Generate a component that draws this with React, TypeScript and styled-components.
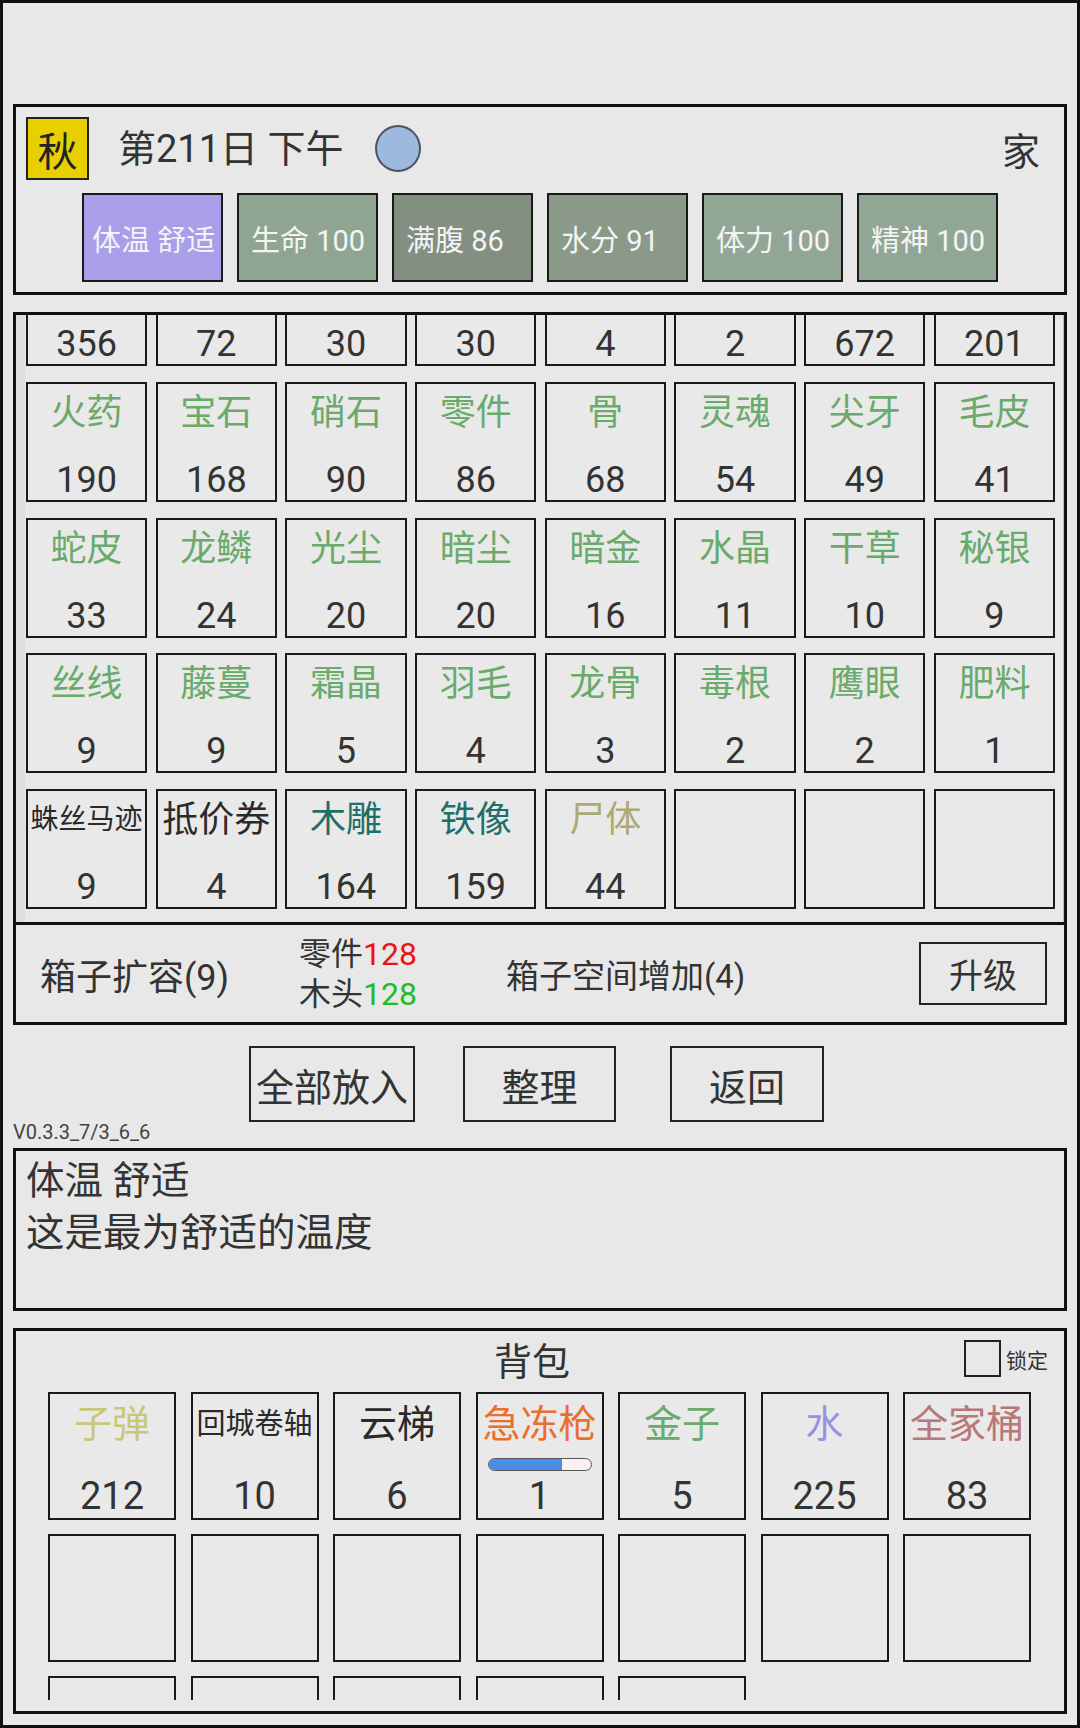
import React, { useLayoutEffect, useRef } from 'react'
import styled, { createGlobalStyle } from 'styled-components'

const GlobalStyle = createGlobalStyle`
  html, body {
    margin: 0;
    padding: 0;
    background: #e8e8e8;
  }
  body {
    font-family: Roboto, "Noto Sans CJK SC", sans-serif;
    color: #333;
  }
  * {
    box-sizing: border-box;
  }
`

type Item = { name: string; count?: number; color?: string; bar?: number }

const GREEN = '#6aaa6a'
const TEAL = '#1f6f68'
const OLIVE = '#aaaa72'
const INK = '#2a2a2a'

const stats = [
  { label: '体温 舒适', bg: '#a99ee9', inset: 8 },
  { label: '生命 100', bg: '#8fa592', inset: 12 },
  { label: '满腹 86', bg: '#838f80', inset: 12 },
  { label: '水分 91', bg: '#8a9988', inset: 12 },
  { label: '体力 100', bg: '#92a695', inset: 12 },
  { label: '精神 100', bg: '#92a695', inset: 12 },
]

const storage: Item[] = [
  { name: '木头', count: 356, color: GREEN },
  { name: '铁矿', count: 72, color: GREEN },
  { name: '石块', count: 30, color: GREEN },
  { name: '布料', count: 30, color: GREEN },
  { name: '皮革', count: 4, color: GREEN },
  { name: '草药', count: 2, color: GREEN },
  { name: '纤维', count: 672, color: GREEN },
  { name: '生肉', count: 201, color: GREEN },
  { name: '火药', count: 190, color: GREEN },
  { name: '宝石', count: 168, color: GREEN },
  { name: '硝石', count: 90, color: GREEN },
  { name: '零件', count: 86, color: GREEN },
  { name: '骨', count: 68, color: GREEN },
  { name: '灵魂', count: 54, color: GREEN },
  { name: '尖牙', count: 49, color: GREEN },
  { name: '毛皮', count: 41, color: GREEN },
  { name: '蛇皮', count: 33, color: GREEN },
  { name: '龙鳞', count: 24, color: GREEN },
  { name: '光尘', count: 20, color: GREEN },
  { name: '暗尘', count: 20, color: GREEN },
  { name: '暗金', count: 16, color: GREEN },
  { name: '水晶', count: 11, color: GREEN },
  { name: '干草', count: 10, color: GREEN },
  { name: '秘银', count: 9, color: GREEN },
  { name: '丝线', count: 9, color: GREEN },
  { name: '藤蔓', count: 9, color: GREEN },
  { name: '霜晶', count: 5, color: GREEN },
  { name: '羽毛', count: 4, color: GREEN },
  { name: '龙骨', count: 3, color: GREEN },
  { name: '毒根', count: 2, color: GREEN },
  { name: '鹰眼', count: 2, color: GREEN },
  { name: '肥料', count: 1, color: GREEN },
  { name: '蛛丝马迹', count: 9, color: INK },
  { name: '抵价券', count: 4, color: INK },
  { name: '木雕', count: 164, color: TEAL },
  { name: '铁像', count: 159, color: TEAL },
  { name: '尸体', count: 44, color: OLIVE },
  { name: '' },
  { name: '' },
  { name: '' },
]

const bag: Item[] = [
  { name: '子弹', count: 212, color: '#c8c878' },
  { name: '回城卷轴', count: 10, color: INK },
  { name: '云梯', count: 6, color: INK },
  { name: '急冻枪', count: 1, color: '#e8702a', bar: 72 },
  { name: '金子', count: 5, color: GREEN },
  { name: '水', count: 225, color: '#9494e0' },
  { name: '全家桶', count: 83, color: '#b87878' },
  ...Array.from({ length: 12 }, () => ({ name: '' })),
]

// shrink long names so they fit inside the slot
const fitSize = (name: string, base: number, inner: number) =>
  Math.min(base, Math.floor(inner / Math.max(name.length, 1)))

const App: React.FC = () => {
  const storageRef = useRef<HTMLDivElement>(null)

  useLayoutEffect(() => {
    const el = storageRef.current
    if (el) el.scrollTop = el.scrollHeight
  }, [])

  return (
    <>
      <GlobalStyle />
      <Page>
        <StatusPanel>
          <HeaderRow>
            <SeasonBadge>秋</SeasonBadge>
            <DayText>第211日 下午</DayText>
            <MoonDot />
            <Location>家</Location>
          </HeaderRow>
          <StatsRow>
            {stats.map((s) => (
              <StatBox key={s.label} $bg={s.bg} $inset={s.inset}>
                {s.label}
              </StatBox>
            ))}
          </StatsRow>
        </StatusPanel>

        <StoragePanel>
          <StorageScroll ref={storageRef}>
            <StorageGrid>
              {storage.map((it, i) => (
                <StorageCell key={i}>
                  {it.name && (
                    <>
                      <StorageName $color={it.color} $size={fitSize(it.name, 36, 113)}>
                        {it.name}
                      </StorageName>
                      <StorageCount>{it.count}</StorageCount>
                    </>
                  )}
                </StorageCell>
              ))}
            </StorageGrid>
          </StorageScroll>
          <ExpandBar>
            <ExpandLabel $size={36}>箱子扩容(9)</ExpandLabel>
            <CostBlock>
              <div>
                零件<CostValue $ok={false}>128</CostValue>
              </div>
              <div>
                木头<CostValue $ok>128</CostValue>
              </div>
            </CostBlock>
            <ExpandLabel $size={33}>箱子空间增加(4)</ExpandLabel>
            <UpgradeButton>升级</UpgradeButton>
          </ExpandBar>
        </StoragePanel>

        <ButtonRow>
          <ActionButton $width={166} $after={48}>全部放入</ActionButton>
          <ActionButton $width={153} $after={54}>整理</ActionButton>
          <ActionButton $width={154} $after={0}>返回</ActionButton>
        </ButtonRow>

        <Version>V0.3.3_7/3_6_6</Version>

        <DescBox>
          <div>体温 舒适</div>
          <div>这是最为舒适的温度</div>
        </DescBox>

        <BagPanel>
          <BagHeader>
            <span />
            <BagTitle>背包</BagTitle>
            <LockToggle>
              <LockBox />
              <LockLabel>锁定</LockLabel>
            </LockToggle>
          </BagHeader>
          <BagScroll>
            <BagGrid>
              {bag.map((it, i) => (
                <BagCell key={i}>
                  {it.name && (
                    <>
                      <BagName $color={it.color} $size={fitSize(it.name, 38, 116)}>
                        {it.name}
                      </BagName>
                      {it.bar !== undefined && (
                        <DurabilityBar>
                          <DurabilityFill style={{ width: `${it.bar}%` }} />
                        </DurabilityBar>
                      )}
                      <BagCount>{it.count}</BagCount>
                    </>
                  )}
                </BagCell>
              ))}
            </BagGrid>
          </BagScroll>
        </BagPanel>
      </Page>
    </>
  )
}

const Page = styled.div`
  width: 1080px;
  height: 1728px;
  border: 3px solid #111;
  background: #e8e8e8;
  padding: 101px 10px 0;
  display: flex;
  flex-direction: column;
  overflow: hidden;
`

const Panel = styled.div`
  border: 3px solid #111;
  background: #e8e8e8;
`

const StatusPanel = styled(Panel)`
  height: 191px;
  padding: 10px 10px 0;
`

const HeaderRow = styled.div`
  display: flex;
  align-items: center;
  height: 63px;
  padding-right: 14px;
`

const SeasonBadge = styled.div`
  width: 63px;
  height: 63px;
  background: #e8d000;
  border: 2px solid #222;
  display: flex;
  align-items: center;
  justify-content: center;
  font-size: 40px;
  color: #222;
`

const DayText = styled.div`
  margin-left: 29px;
  font-size: 38px;
  line-height: 1;
  color: #333;
`

const MoonDot = styled.div`
  margin-left: 31px;
  width: 46px;
  height: 47px;
  border-radius: 50%;
  background: #9db9de;
  border: 2px solid #4a5560;
`

const Location = styled.div`
  margin-left: auto;
  font-size: 38px;
  color: #333;
`

const StatsRow = styled.div`
  display: flex;
  justify-content: center;
  gap: 14px;
  margin-top: 13px;
`

const StatBox = styled.div<{ $bg: string; $inset: number }>`
  width: 141px;
  height: 89px;
  border: 2px solid #1a1a1a;
  background: ${(p) => p.$bg};
  color: #f4f4f4;
  font-size: 29px;
  display: flex;
  align-items: center;
  padding-left: ${(p) => p.$inset}px;
  white-space: nowrap;
  overflow: hidden;
`

const StoragePanel = styled(Panel)`
  margin-top: 17px;
  height: 713px;
  display: flex;
  flex-direction: column;
`

const StorageScroll = styled.div`
  height: 607px;
  flex: none;
  overflow-y: scroll;
  scrollbar-width: none;
  padding: 0 9px 0 10px;
  box-shadow: inset 9px 0 0 #dedede, inset -1px 0 0 #bdbdbd;
  &::-webkit-scrollbar {
    display: none;
  }
`

const StorageGrid = styled.div`
  display: grid;
  grid-template-columns: repeat(8, 1fr);
  grid-auto-rows: 120px;
  column-gap: 8.5px;
  row-gap: 15.75px;
  padding-bottom: 13px;
`

const StorageCell = styled.div`
  border: 2px solid #1a1a1a;
  background: #e9e9e9;
  display: flex;
  flex-direction: column;
  align-items: center;
`

const StorageName = styled.div<{ $color?: string; $size: number }>`
  margin-top: 9px;
  line-height: 40px;
  font-size: ${(p) => p.$size}px;
  color: ${(p) => p.$color || INK};
  white-space: nowrap;
`

const StorageCount = styled.div`
  margin-top: auto;
  line-height: 40px;
  font-size: 36px;
  color: #333;
`

const ExpandBar = styled.div`
  flex: 1;
  border-top: 3px solid #111;
  display: grid;
  grid-template-columns: 259px 207px 1fr auto;
  align-items: center;
  padding: 0 17px 0 24px;
`

const ExpandLabel = styled.div<{ $size: number }>`
  font-size: ${(p) => p.$size}px;
  color: #333;
  white-space: nowrap;
`

const CostBlock = styled.div`
  font-size: 32px;
  line-height: 40px;
  color: #333;
`

const CostValue = styled.span<{ $ok: boolean }>`
  color: ${(p) => (p.$ok ? '#22bb22' : '#ee1111')};
`

const UpgradeButton = styled.div`
  width: 128px;
  height: 63px;
  border: 2px solid #222;
  display: flex;
  align-items: center;
  justify-content: center;
  font-size: 34px;
  color: #333;
`

const ButtonRow = styled.div`
  margin-top: 21px;
  display: flex;
  justify-content: center;
  padding-right: 7px;
`

const ActionButton = styled.div<{ $width: number; $after: number }>`
  width: ${(p) => p.$width}px;
  height: 76px;
  margin-right: ${(p) => p.$after}px;
  border: 2px solid #222;
  display: flex;
  align-items: center;
  justify-content: center;
  font-size: 38px;
  color: #333;
`

const Version = styled.div`
  font-size: 20px;
  line-height: 20px;
  color: #444;
`

const DescBox = styled(Panel)`
  margin-top: 6px;
  height: 163px;
  padding: 4px 10px;
  font-size: 38.5px;
  line-height: 52px;
  color: #333;
`

const BagPanel = styled(Panel)`
  margin-top: 17px;
  height: 386px;
`

const BagHeader = styled.div`
  display: grid;
  grid-template-columns: 1fr auto 1fr;
  height: 61px;
  padding-right: 16px;
`

const BagTitle = styled.div`
  font-size: 38px;
  line-height: 61px;
  padding-top: 1px;
  color: #333;
`

const LockToggle = styled.div`
  justify-self: end;
  align-self: start;
  margin-top: 9px;
  display: flex;
  align-items: center;
  gap: 5px;
`

const LockBox = styled.div`
  width: 37px;
  height: 37px;
  border: 2px solid #222;
`

const LockLabel = styled.div`
  font-size: 21px;
  color: #333;
`

const BagScroll = styled.div`
  height: 308px;
  overflow: hidden;
  padding-left: 32px;
`

const BagGrid = styled.div`
  display: grid;
  grid-template-columns: repeat(7, 128px);
  grid-auto-rows: 128px;
  column-gap: 14.5px;
  row-gap: 14px;
`

const BagCell = styled.div`
  border: 2px solid #1a1a1a;
  background: #e9e9e9;
  display: flex;
  flex-direction: column;
  align-items: center;
`

const BagName = styled.div<{ $color?: string; $size: number }>`
  margin-top: 8px;
  line-height: 44px;
  font-size: ${(p) => p.$size}px;
  color: ${(p) => p.$color || INK};
  white-space: nowrap;
`

const BagCount = styled.div`
  margin-top: auto;
  line-height: 44px;
  font-size: 38px;
  color: #333;
`

const DurabilityBar = styled.div`
  margin-top: 12px;
  width: 104px;
  height: 13px;
  border: 1.5px solid #555;
  border-radius: 7px;
  background: #fbeff0;
  overflow: hidden;
`

const DurabilityFill = styled.div`
  height: 100%;
  background: #4a8de8;
`

export default App
